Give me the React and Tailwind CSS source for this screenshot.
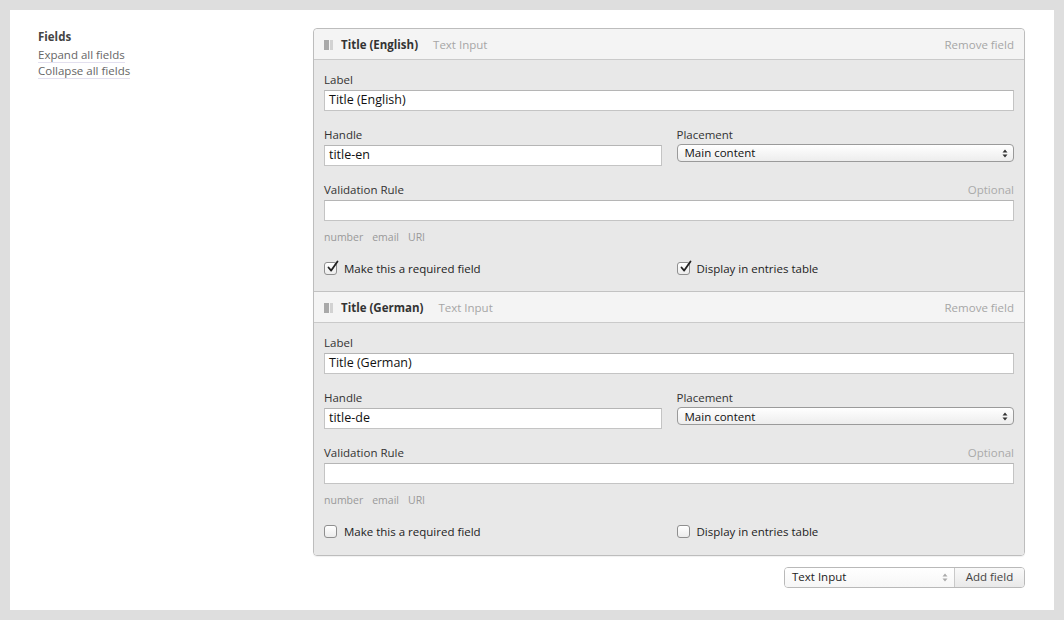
import React from 'react';

const font = { fontFamily: '"Open Sans", "DejaVu Sans", sans-serif' };

// up/down arrows used by the mac style selects
const Arrows = ({ className = 'text-[#333]' }) => (
  <svg width="6" height="9" viewBox="0 0 6 9" className={className}>
    <path d="M0.5 3.5 L3 0.5 L5.5 3.5 Z M0.5 5.5 L3 8.5 L5.5 5.5 Z" fill="currentColor" />
  </svg>
);

const Checkbox = ({ checked }) => (
  <span className="relative w-[13px] h-[13px] rounded-[3px] border border-[#8f8f8f] bg-gradient-to-b from-white to-[#ececec] shadow-[inset_0_1px_0_rgba(255,255,255,0.8)] shrink-0">
    {checked && (
      <svg width="14" height="14" viewBox="0 0 14 14" className="absolute -top-[3px] left-[1px]">
        <path d="M2.5 7.5 L5.2 10.6 L11.5 1.5" fill="none" stroke="#222" strokeWidth="1.8" strokeLinecap="round" strokeLinejoin="round" />
      </svg>
    )}
  </span>
);

const TextBox = ({ value, className = '' }) => (
  <div className={`h-[21px] bg-white border border-[#c4c4c4] border-t-[#b5b5b5] flex items-center px-[4px] text-[12.5px] text-[#111] ${className}`}>
    {value}
  </div>
);

const FieldBlock = ({ title, label, handle, checked, first }) => (
  <div className={first ? '' : 'border-t border-[#c2c2c2]'}>
    {/* header */}
    <div className={`h-[31px] bg-[#f4f4f4] border-b border-[#cacaca] flex items-center px-[10px] pt-[1px] ${first ? 'rounded-t-[4px]' : ''}`}>
      <span className="flex items-center gap-[1px] mr-[8px]">
        <span className="w-[5px] h-[10px] bg-[#a9a9a9]" />
        <span className="w-[3px] h-[10px] bg-[#d2d2d2]" />
      </span>
      <span className="text-[11.5px] font-bold text-[#333]">{title}</span>
      <span className="ml-[15px] text-[11.5px] text-[#a6a6a6]">Text Input</span>
      <span className="ml-auto text-[11.5px] text-[#a6a6a6]">Remove field</span>
    </div>

    {/* body */}
    <div className="bg-[#e8e8e8] px-[10px] pt-[12px] pb-[14px]">
      <div className="text-[11.5px] leading-[16px] text-[#333]">Label</div>
      <TextBox value={label} className="mt-[2px]" />

      <div className="grid grid-cols-2 gap-x-[15px] mt-[16px]">
        <div>
          <div className="text-[11.5px] leading-[16px] text-[#333]">Handle</div>
          <TextBox value={handle} className="mt-[2px]" />
        </div>
        <div>
          <div className="text-[11.5px] leading-[16px] text-[#333]">Placement</div>
          <div className="mt-[1px] h-[18px] rounded-[4px] border border-[#9a9a9a] bg-gradient-to-b from-white to-[#ededed] flex items-center pl-[7px] pr-[5px] text-[11.5px] text-[#111]">
            Main content
            <span className="ml-auto"><Arrows /></span>
          </div>
        </div>
      </div>

      <div className="flex mt-[16px] text-[11.5px] leading-[16px]">
        <span className="text-[#333]">Validation Rule</span>
        <span className="ml-auto text-[#aaa]">Optional</span>
      </div>
      <TextBox value="" className="mt-[2px]" />

      <div className="flex gap-[9px] mt-[8px] text-[10.5px] leading-[16px] text-[#999]">
        <span>number</span>
        <span>email</span>
        <span>URI</span>
      </div>

      <div className="grid grid-cols-2 gap-x-[15px] mt-[15px] text-[11.5px] text-[#222]">
        <label className="flex items-center gap-[7px]">
          <Checkbox checked={checked} />
          Make this a required field
        </label>
        <label className="flex items-center gap-[7px]">
          <Checkbox checked={checked} />
          Display in entries table
        </label>
      </div>
    </div>
  </div>
);

export default function App() {
  return (
    <div className="min-h-screen bg-[#dedede] p-[10px]" style={font}>
      <div className="bg-white h-[600px] flex pl-[28px] pr-[29px] pt-[18px]">
        {/* sidebar */}
        <div className="w-[275px] shrink-0 pt-[1px]">
          <div className="text-[11.5px] font-bold text-[#444] leading-[16px]">Fields</div>
          <div className="mt-[2px] flex flex-col items-start text-[11.5px] text-[#666] leading-[15px]">
            <a className="border-b border-[#e3e0ef]">Expand all fields</a>
            <a className="border-b border-[#e3e0ef]">Collapse all fields</a>
          </div>
        </div>

        {/* fields editor */}
        <div className="flex-1">
          <div className="border border-[#bdbdbd] rounded-[4px] shadow-[0_1px_1px_rgba(0,0,0,0.06)] overflow-hidden">
            <FieldBlock first title="Title (English)" label="Title (English)" handle="title-en" checked />
            <FieldBlock title="Title (German)" label="Title (German)" handle="title-de" checked={false} />
          </div>

          <div className="flex justify-end mt-[11px]">
            <div className="flex h-[21px] border border-[#b9b9b9] rounded-[4px] overflow-hidden text-[11.5px]">
              <div className="w-[170px] flex items-center pl-[7px] pr-[6px] bg-gradient-to-b from-white to-[#f6f6f6] text-[#222] border-r border-[#c9c9c9]">
                Text Input
                <span className="ml-auto"><Arrows className="text-[#aaa]" /></span>
              </div>
              <div className="w-[69px] flex items-center justify-center bg-gradient-to-b from-[#f9f9f9] to-[#e9e9e9] text-[#444]">
                Add field
              </div>
            </div>
          </div>
        </div>
      </div>
    </div>
  );
}
